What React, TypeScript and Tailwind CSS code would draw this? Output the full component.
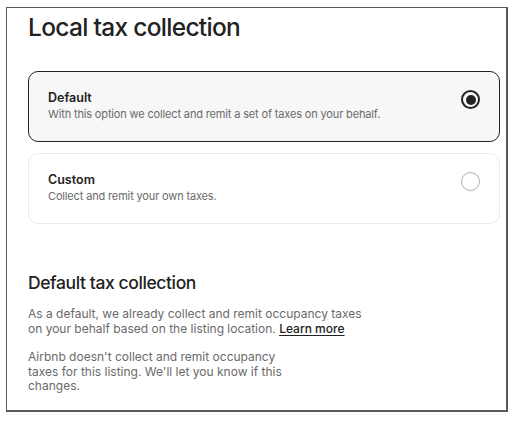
export default function App() {
  return (
    <div className="w-[525px] h-[421px] bg-white pt-[7px] pl-[6px]" style={{ fontFamily: "Inter, 'Noto Sans', sans-serif" }}>
      <div className="w-[502px] h-[405px] border border-[#5a5a5a] border-r-2 border-b-2 pl-[21px] pr-[6px] pt-[3px] text-[#222222]">
        {/* Heading */}
        <h1 className="text-[24.5px] leading-[32px] font-medium tracking-[-0.7px]">Local tax collection</h1>

        {/* Options */}
        <div className="mt-[28px] flex flex-col gap-[11px]">
          <OptionCard
            title="Default"
            desc="With this option we collect and remit a set of taxes on your behalf."
            selected
          />
          <OptionCard title="Custom" desc="Collect and remit your own taxes." />
        </div>

        {/* Default tax section */}
        <h2 className="mt-[47px] text-[17.5px] leading-[24px] font-medium tracking-[-0.4px]">Default tax collection</h2>
        <p className="mt-[11px] max-w-[345px] text-[12px] leading-[15px] text-[#6a6a6a]">
          As a default, we already collect and remit occupancy taxes on your behalf based on the listing location.{" "}
          <a className="underline underline-offset-2 font-medium text-[#222222]">Learn more</a>
        </p>
        <p className="mt-[14px] max-w-[258px] text-[12px] leading-[14.5px] text-[#6a6a6a]">
          Airbnb doesn't collect and remit occupancy taxes for this listing. We'll let you know if this changes.
        </p>
      </div>
    </div>
  );
}

function OptionCard({ title, desc, selected }: { title: string; desc: string; selected?: boolean }) {
  return (
    <div
      className={`h-[71px] rounded-[10px] flex items-start justify-between pl-[19px] pr-[19px] pt-[17px] ${
        selected ? "bg-[#f7f7f7] border-[1.5px] border-[#222222]" : "bg-white border border-[#ebebeb]"
      }`}
    >
      <div>
        <p className="text-[12.5px] leading-[18px] font-semibold">{title}</p>
        <p className="text-[11px] leading-[14px] text-[#6a6a6a] tracking-[-0.15px]">{desc}</p>
      </div>
      {selected ? (
        <div className="mt-[1px] w-[19px] h-[19px] rounded-full border-2 border-[#222222] flex items-center justify-center">
          <div className="w-[10px] h-[10px] rounded-full bg-[#222222]" />
        </div>
      ) : (
        <div className="mt-[1px] w-[19px] h-[19px] rounded-full border border-[#b0b0b0] bg-white" />
      )}
    </div>
  );
}
